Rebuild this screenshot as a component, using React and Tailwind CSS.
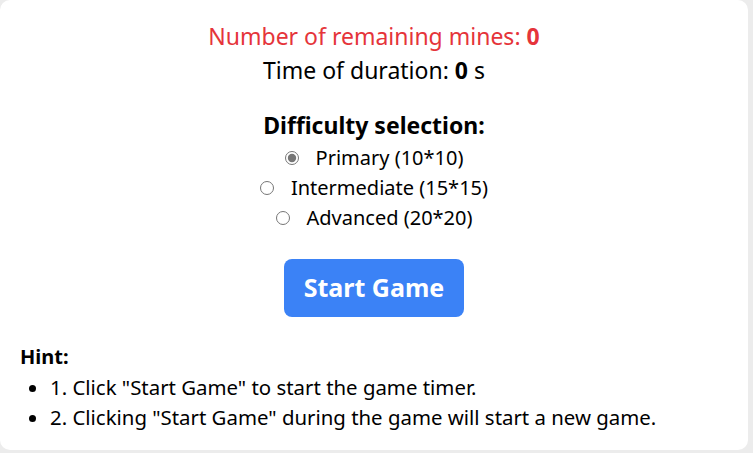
import React, { useState } from "react";

const levels = [
  { key: "primary", label: "Primary (10*10)" },
  { key: "intermediate", label: "Intermediate (15*15)" },
  { key: "advanced", label: "Advanced (20*20)" },
];

export default function App() {
  const [level, setLevel] = useState("primary");

  return (
    <div className="w-[753px] h-[453px] bg-[#ececec] overflow-hidden" style={{ fontFamily: '"Noto Sans", "Open Sans", sans-serif' }}>
      <div className="w-[748px] h-[450px] bg-white rounded-[10px] pt-[19px] text-black">
        <div className="text-center text-[23px] leading-[34px] text-[#e5343a]">
          Number of remaining mines: <b>0</b>
        </div>
        <div className="text-center text-[23px] leading-[34px]">
          Time of duration: <b>0</b> s
        </div>

        <div className="mt-[23px] text-center">
          <div className="text-[23px] leading-[30px] font-bold mb-[3px]">Difficulty selection:</div>
          {levels.map(l => (
            <label key={l.key} className="flex items-center justify-center text-[20px] leading-[30px]">
              <input
                type="radio"
                name="level"
                checked={level === l.key}
                onChange={() => setLevel(l.key)}
                className="w-[14px] h-[14px] mr-[17px] accent-[#767676]"
              />
              {l.label}
            </label>
          ))}
        </div>

        <div className="flex justify-center mt-[26px]">
          <button className="w-[180px] h-[58px] rounded-[8px] bg-[#3b82f6] text-white text-[25px] font-bold">
            Start Game
          </button>
        </div>

        <div className="mt-[25px] px-[20px] text-[20.4px] leading-[30px]">
          <div className="font-bold text-[20px]">Hint:</div>
          <ul className="list-disc pl-[30px]">
            <li>1. Click "Start Game" to start the game timer.</li>
            <li>2. Clicking "Start Game" during the game will start a new game.</li>
          </ul>
        </div>
      </div>
    </div>
  );
}
